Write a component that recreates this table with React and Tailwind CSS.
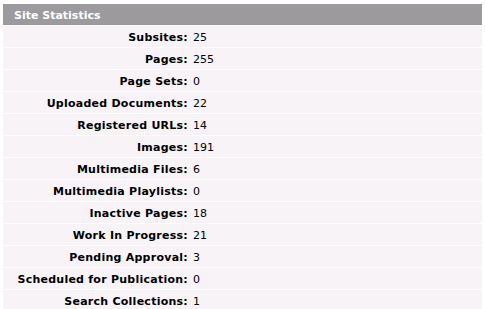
import React from 'react';

const stats = [
    ['Subsites', '25'],
    ['Pages', '255'],
    ['Page Sets', '0'],
    ['Uploaded Documents', '22'],
    ['Registered URLs', '14'],
    ['Images', '191'],
    ['Multimedia Files', '6'],
    ['Multimedia Playlists', '0'],
    ['Inactive Pages', '18'],
    ['Work In Progress', '21'],
    ['Pending Approval', '3'],
    ['Scheduled for Publication', '0'],
    ['Search Collections', '1'],
];

const App = () => {
    return (
        <div className="min-h-screen bg-white pl-[3px] pt-[4px] font-['Verdana','DejaVu_Sans',sans-serif] text-[11px] text-black">
            <div className="w-[479px] flex flex-col gap-[1px]">
                <div className="h-[21px] bg-[#9c9a9c] pl-[11px] pt-[4px] flex items-center font-bold text-white">
                    Site Statistics
                </div>
                {stats.map(([label, value]) => (
                    <div key={label} className="h-[21px] bg-[#f7f3f7] pt-[4px] flex items-center">
                        <div className="w-[185px] text-right font-bold tracking-[0.25px]">{label}:</div>
                        <div className="pl-[5px]">{value}</div>
                    </div>
                ))}
            </div>
        </div>
    );
};

export default App;
